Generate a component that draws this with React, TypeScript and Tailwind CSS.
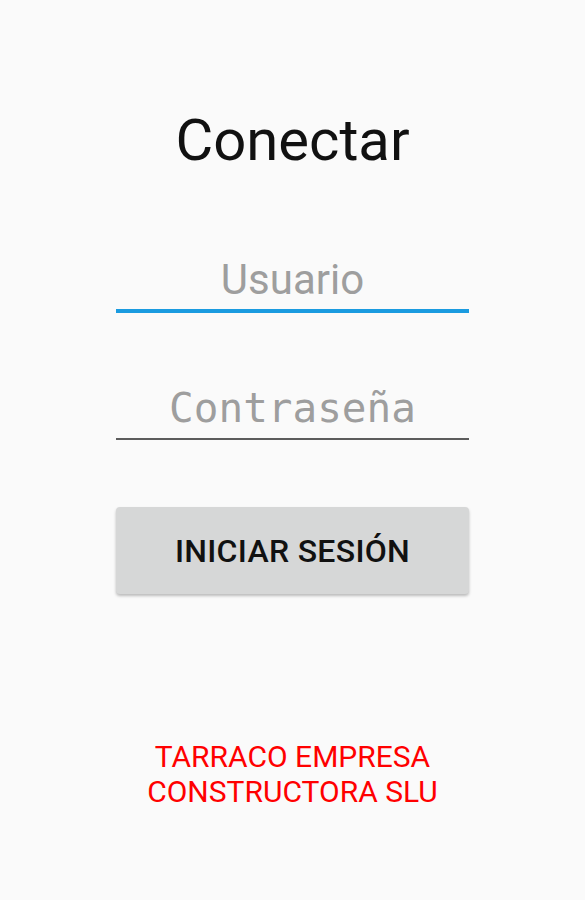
import React from 'react';

const roboto = { fontFamily: 'Roboto, "Noto Sans", sans-serif' };

export default function App() {
  return (
    <div
      className="min-h-[900px] w-full bg-[#fafafa] flex flex-col items-center"
      style={roboto}
    >
      <h1 className="mt-[111px] text-[58px] leading-none text-[#111111] font-normal">
        Conectar
      </h1>

      <div className="mt-[81px] w-[353px] flex flex-col">
        {/* Usuario */}
        <input
          type="text"
          placeholder="Usuario"
          className="h-[63px] w-full bg-transparent text-center text-[42px] text-[#222] placeholder:text-[#9e9e9e] border-b-[4px] border-[#1a9be0] outline-none p-0"
          style={roboto}
        />
        {/* Contraseña */}
        <input
          type="password"
          placeholder="Contraseña"
          className="mt-[64px] h-[63px] w-full bg-transparent text-center text-[41px] text-[#222] placeholder:text-[#9e9e9e] border-b-[2px] border-[#5c5c5c] outline-none p-0 font-['DejaVu_Sans_Mono',monospace]"
        />

        <button className="mt-[67px] h-[87px] w-full rounded-[4px] bg-[#d6d7d7] shadow-[0_2px_3px_rgba(0,0,0,0.25)] text-[32px] font-medium text-[#111111] tracking-[0.3px]">
          INICIAR SESIÓN
        </button>
      </div>

      <p className="mt-[145px] text-center text-[30px] leading-[35px] text-[#ff0000]">
        TARRACO EMPRESA
        <br />
        CONSTRUCTORA SLU
      </p>
    </div>
  );
}
